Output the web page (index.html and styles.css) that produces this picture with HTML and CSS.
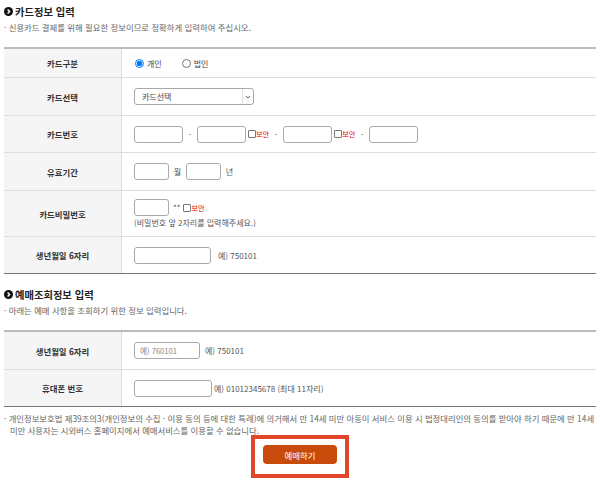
FILE: index.html
```html
<!DOCTYPE html>
<html lang="ko">
<head>
<meta charset="utf-8">
<title>카드정보 입력</title>
<link rel="stylesheet" href="styles.css">
</head>
<body>
<div class="page">
  <section class="section">
    <h2 class="sec-title"><span class="sec-icon"><svg viewBox="0 0 10 10" width="9" height="9"><circle cx="5" cy="5" r="5" fill="#111"/><path d="M4 2.8 L6.2 5 L4 7.2" fill="none" stroke="#fff" stroke-width="1.6"/></svg></span>카드정보 입력</h2>
    <p class="sec-desc">· 신용카드 결제를 위해 필요한 정보이므로 정확하게 입력하여 주십시오.</p>
    <div class="form">
      <div class="row r30">
        <div class="label">카드구분</div>
        <div class="cell">
          <label class="radio"><input type="radio" name="ctype" checked> 개인</label>
          <label class="radio"><input type="radio" name="ctype"> 법인</label>
        </div>
      </div>
      <div class="row r38">
        <div class="label">카드선택</div>
        <div class="cell">
          <div class="select"><span class="sel-text">카드선택</span><span class="sel-arrow"><svg viewBox="0 0 8 6" width="6" height="4"><path d="M1 1.5 L4 4.5 L7 1.5" fill="none" stroke="#555" stroke-width="1.4"/></svg></span></div>
        </div>
      </div>
      <div class="row r37">
        <div class="label">카드번호</div>
        <div class="cell">
          <span class="box w49"></span><span class="dash">-</span><span class="box w49"></span><span class="chk"></span><span class="sec">보안</span><span class="dash">-</span><span class="box w49"></span><span class="chk"></span><span class="sec">보안</span><span class="dash">-</span><span class="box w49"></span>
        </div>
      </div>
      <div class="row r38">
        <div class="label">유효기간</div>
        <div class="cell">
          <span class="box w36"></span><span class="unit">월</span><span class="box w36"></span><span class="unit">년</span>
        </div>
      </div>
      <div class="row r46">
        <div class="label">카드비밀번호</div>
        <div class="cell col">
          <div class="line"><span class="box w36"></span><span class="stars">**</span><span class="chk"></span><span class="sec">보안</span></div>
          <div class="hint">(비밀번호 앞 2자리를 입력해주세요.)</div>
        </div>
      </div>
      <div class="row r37 last">
        <div class="label">생년월일 6자리</div>
        <div class="cell">
          <span class="box w77"></span><span class="ex">예) 750101</span>
        </div>
      </div>
    </div>
  </section>

  <section class="section second">
    <h2 class="sec-title"><span class="sec-icon"><svg viewBox="0 0 10 10" width="9" height="9"><circle cx="5" cy="5" r="5" fill="#111"/><path d="M4 2.8 L6.2 5 L4 7.2" fill="none" stroke="#fff" stroke-width="1.6"/></svg></span>예매조회정보 입력</h2>
    <p class="sec-desc">· 아래는 예매 사항을 조회하기 위한 정보 입력입니다.</p>
    <div class="form">
      <div class="row r38">
        <div class="label">생년월일 6자리</div>
        <div class="cell">
          <span class="box w66 ph">예) 760101</span><span class="ex2">예) 750101</span>
        </div>
      </div>
      <div class="row r37 last">
        <div class="label">휴대폰 번호</div>
        <div class="cell">
          <span class="box w78"></span><span class="ex3">예) 01012345678 (최대 11자리)</span>
        </div>
      </div>
    </div>
  </section>

  <p class="note">· 개인정보보호법 제39조의3(개인정보의 수집 · 이용 동의 등에 대한 특례)에 의거해서 만 14세 미만 아동이 서비스 이용 시 법정대리인의 동의를 받아야 하기 때문에 만 14세 미만 사용자는 시외버스 홈페이지에서 예매서비스를 이용할 수 없습니다.</p>

  <div class="btn-wrap">
    <div class="btn-frame"><button class="btn" type="button">예매하기</button></div>
  </div>
</div>
</body>
</html>
```

FILE: styles.css
```css
* { box-sizing: border-box; }
html, body { margin: 0; padding: 0; background: #fff; }
body {
  font-family: "Noto Sans CJK KR", "Noto Sans", sans-serif;
  color: #555;
}
.page { width: 600px; padding: 3px 4px 0 4px; }

.sec-title {
  margin: 0;
  display: flex;
  align-items: center;
  height: 16px;
  font-size: 10.3px;
  font-weight: bold;
  color: #222;
}
.sec-icon { display: inline-flex; width: 11px; }
.sec-desc {
  margin: 2px 0 0 0;
  height: 12px;
  line-height: 12px;
  font-size: 8.4px;
  color: #666;
}
.form {
  margin-top: 14px;
  border-top: 2px solid #bcbcbc;
}
.second { margin-top: 12px; }

.row {
  display: grid;
  grid-template-columns: 118px 1fr;
  border-bottom: 1px solid #ddd;
}
.row.last { border-bottom: 1px solid #777; }
.r30 { height: 29px; }
.r37 { height: 37px; }
.r38 { height: 38px; }
.r46 { height: 46px; }

.label {
  background: #f5f5f5;
  border-right: 1px solid #ddd;
  display: flex;
  align-items: center;
  justify-content: center;
  font-size: 8.4px;
  font-weight: bold;
  color: #333;
}
.cell {
  display: flex;
  align-items: center;
  padding-left: 12px;
  font-size: 8px;
  color: #555;
}
.cell.col {
  flex-direction: column;
  align-items: flex-start;
  justify-content: center;
}
.line { display: flex; align-items: center; }
.hint { margin-top: 2px; line-height: 10px; color: #555; }

.radio {
  display: inline-flex;
  align-items: center;
  margin-right: 19px;
  color: #444;
}
.radio input {
  width: 9px;
  height: 9px;
  margin: 0 3px 0 1px;
}

.select {
  width: 120px;
  height: 17px;
  border: 1px solid #aaa;
  border-radius: 3px;
  display: flex;
  align-items: center;
  background: #fff;
}
.sel-text { flex: 1; padding-left: 7px; color: #444; }
.sel-arrow {
  width: 11px;
  height: 100%;
  border-left: 1px solid #e2e2e2;
  display: flex;
  align-items: center;
  justify-content: center;
}

.box {
  display: inline-flex;
  align-items: center;
  height: 17px;
  border: 1px solid #aaa;
  border-radius: 3px;
  background: #fff;
}
.w36 { width: 35px; }
.w49 { width: 49px; }
.w66 { width: 66px; }
.w77 { width: 77px; }
.w78 { width: 78px; }
.ph { padding-left: 5px; color: #888; font-size: 7.6px; }

.dash { width: 14px; text-align: center; color: #666; }
.sec + .dash { width: 14px; }
.chk {
  display: inline-block;
  width: 8px;
  height: 8px;
  margin-left: 2px;
  border: 1px solid #777;
  border-radius: 1px;
  background: #fff;
}
.sec { color: #e00; font-size: 7.2px; }
.unit { width: 17px; text-align: center; color: #555; }
.stars { margin: 0 1px 0 4px; color: #555; }
.ex { margin-left: 7px; }
.ex2 { margin-left: 5px; }
.ex3 { margin-left: 2px; }

.note {
  margin: 5px 0 0 0;
  padding-left: 6px;
  text-indent: -6px;
  font-size: 8.35px;
  line-height: 12px;
  color: #666;
}
.btn-wrap { display: flex; justify-content: center; }
.btn-frame {
  border: 4px solid #e0462a;
  padding: 6px 8px 10px 8px;
  margin-top: -1px;
  background: #fff;
}
.btn {
  display: block;
  width: 74px;
  height: 19px;
  border: none;
  border-radius: 4px;
  background: #c94b0b;
  color: #fff;
  font-family: "Noto Sans CJK KR", sans-serif;
  font-size: 8.4px;
  padding: 0;
}
```
